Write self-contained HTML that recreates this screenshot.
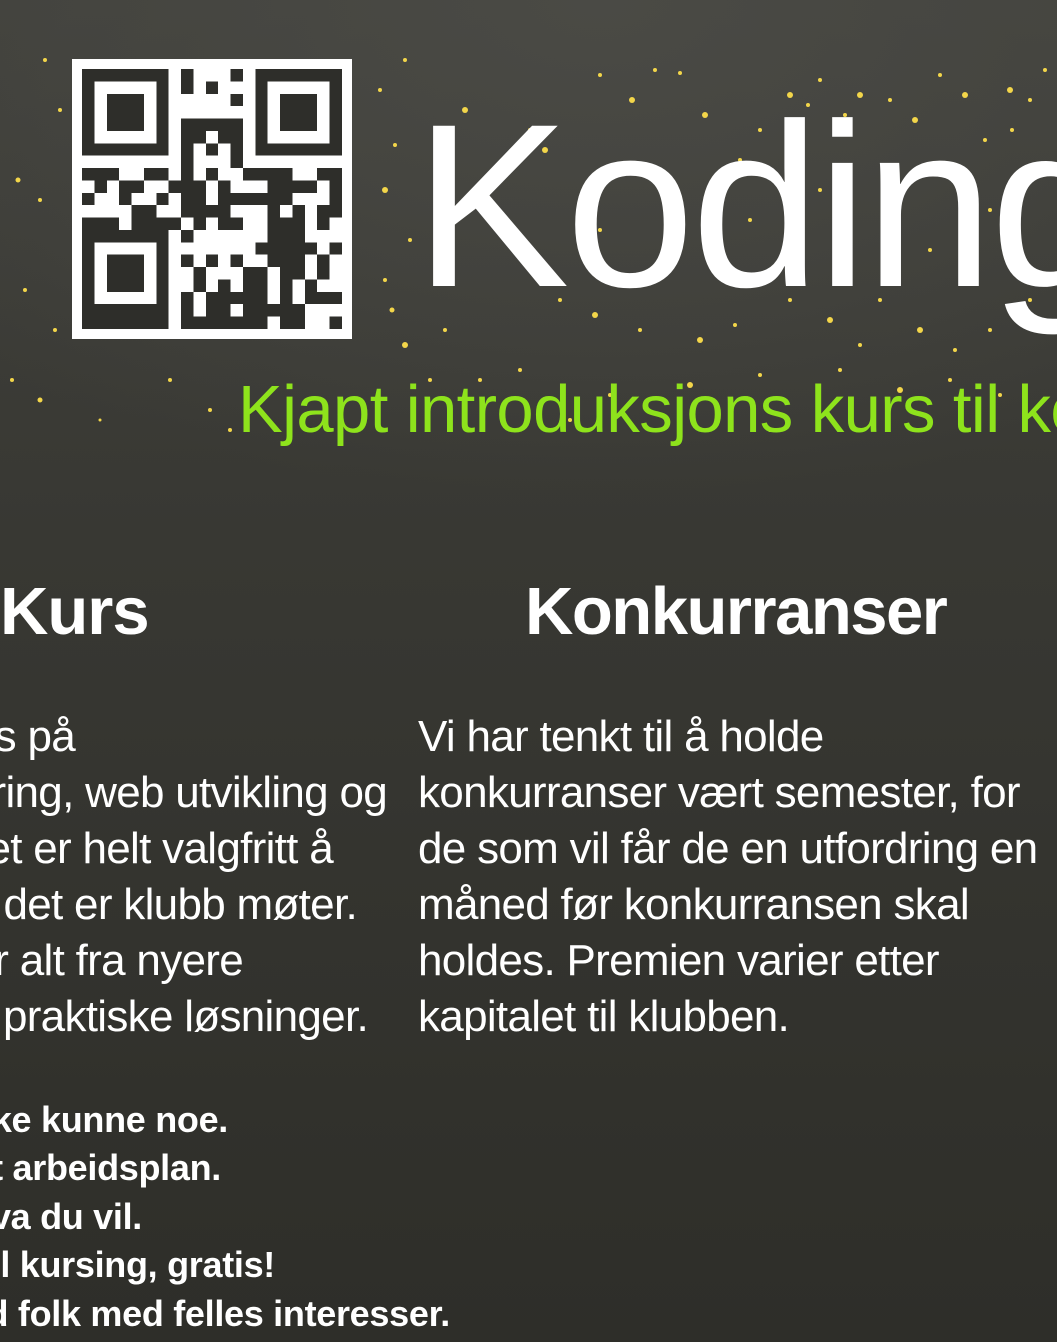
<!DOCTYPE html>
<html><head><meta charset="utf-8"><style>
html,body{margin:0;padding:0;}
body{width:1057px;height:1342px;overflow:hidden;position:relative;
background:radial-gradient(ellipse 900px 500px at 600px 0px,#4a4a45 0%,rgba(60,60,56,0) 100%),linear-gradient(#41413c 0%,#383833 40%,#2e2e29 100%);
font-family:"Liberation Sans",sans-serif;color:#fff;}
.a{position:absolute;white-space:nowrap;}
.body{font-size:44px;line-height:56px;letter-spacing:-0.7px;}
.list{font-size:36px;line-height:48.5px;font-weight:bold;letter-spacing:-0.3px;}
.r{text-align:right;}
.clip{position:absolute;left:0;top:0;width:1057px;height:1342px;overflow:hidden;}
</style></head><body><div class="clip">
<svg class="a" style="left:0;top:0" width="1057" height="460">
<g fill="#f3d64a">
<circle cx="45" cy="60" r="2"/><circle cx="60" cy="110" r="2"/><circle cx="18" cy="180" r="2.5"/><circle cx="40" cy="200" r="2"/><circle cx="25" cy="290" r="2"/><circle cx="55" cy="330" r="2"/><circle cx="12" cy="380" r="2"/><circle cx="40" cy="400" r="2.5"/><circle cx="100" cy="420" r="1.5"/><circle cx="170" cy="380" r="2"/><circle cx="210" cy="410" r="2"/><circle cx="230" cy="430" r="2"/>
<circle cx="385" cy="190" r="3"/><circle cx="395" cy="145" r="2"/><circle cx="380" cy="90" r="2"/><circle cx="405" cy="60" r="2"/><circle cx="410" cy="240" r="2"/><circle cx="392" cy="310" r="2.5"/><circle cx="405" cy="345" r="3"/><circle cx="430" cy="380" r="2"/><circle cx="445" cy="330" r="2"/><circle cx="385" cy="280" r="2"/>
<circle cx="465" cy="110" r="3"/><circle cx="500" cy="170" r="2"/><circle cx="530" cy="130" r="2"/><circle cx="545" cy="150" r="3"/><circle cx="600" cy="75" r="2"/><circle cx="632" cy="100" r="3"/><circle cx="655" cy="70" r="2"/><circle cx="680" cy="73" r="2"/><circle cx="705" cy="115" r="3"/><circle cx="740" cy="160" r="2"/><circle cx="760" cy="130" r="2"/><circle cx="790" cy="95" r="3"/><circle cx="808" cy="105" r="2"/><circle cx="820" cy="80" r="2"/><circle cx="845" cy="115" r="2"/><circle cx="860" cy="95" r="3"/><circle cx="890" cy="100" r="2"/><circle cx="915" cy="120" r="3"/><circle cx="940" cy="75" r="2"/><circle cx="965" cy="95" r="3"/><circle cx="985" cy="140" r="2"/><circle cx="1010" cy="90" r="3"/><circle cx="1030" cy="100" r="2"/><circle cx="1045" cy="70" r="2"/><circle cx="1012" cy="130" r="2"/>
<circle cx="560" cy="300" r="2"/><circle cx="595" cy="315" r="3"/><circle cx="640" cy="330" r="2"/><circle cx="700" cy="340" r="3"/><circle cx="735" cy="325" r="2"/><circle cx="790" cy="300" r="2"/><circle cx="830" cy="320" r="3"/><circle cx="860" cy="345" r="2"/><circle cx="880" cy="300" r="2"/><circle cx="920" cy="330" r="3"/><circle cx="955" cy="350" r="2"/><circle cx="990" cy="330" r="2"/><circle cx="1030" cy="300" r="2"/>
<circle cx="480" cy="380" r="2"/><circle cx="520" cy="370" r="2"/><circle cx="610" cy="395" r="2"/><circle cx="690" cy="385" r="3"/><circle cx="760" cy="375" r="2"/><circle cx="840" cy="370" r="2"/><circle cx="900" cy="390" r="3"/><circle cx="950" cy="380" r="2"/><circle cx="1000" cy="395" r="2"/><circle cx="570" cy="420" r="2"/><circle cx="770" cy="430" r="2"/>
<circle cx="820" cy="190" r="2"/><circle cx="930" cy="250" r="2"/><circle cx="750" cy="220" r="2"/><circle cx="600" cy="230" r="2"/><circle cx="990" cy="210" r="2"/>
</g></svg>
<div class="a" style="left:72px;top:59px;width:280px;height:280px;background:#fff;"></div>
<svg class="a" style="left:82px;top:69px" width="260" height="260" viewBox="0 0 21 21" shape-rendering="crispEdges">
<path fill="#2e2e2a" d="M0 0h7v1h-7zM8 0h1v1h-1zM12 0h1v1h-1zM14 0h7v1h-7z
M0 1h1v1h-1zM6 1h1v1h-1zM8 1h1v1h-1zM10 1h1v1h-1zM14 1h1v1h-1zM20 1h1v1h-1z
M0 2h1v1h-1zM2 2h3v1h-3zM6 2h1v1h-1zM12 2h1v1h-1zM14 2h1v1h-1zM16 2h3v1h-3zM20 2h1v1h-1z
M0 3h1v1h-1zM2 3h3v1h-3zM6 3h1v1h-1zM14 3h1v1h-1zM16 3h3v1h-3zM20 3h1v1h-1z
M0 4h1v1h-1zM2 4h3v1h-3zM6 4h1v1h-1zM8 4h5v1h-5zM14 4h1v1h-1zM16 4h3v1h-3zM20 4h1v1h-1z
M0 5h1v1h-1zM6 5h1v1h-1zM8 5h2v1h-2zM11 5h2v1h-2zM14 5h1v1h-1zM20 5h1v1h-1z
M0 6h7v1h-7zM8 6h1v1h-1zM10 6h1v1h-1zM12 6h1v1h-1zM14 6h7v1h-7z
M8 7h1v1h-1zM12 7h1v1h-1z
M0 8h3v1h-3zM5 8h2v1h-2zM8 8h1v1h-1zM10 8h1v1h-1zM13 8h4v1h-4zM19 8h2v1h-2z
M1 9h1v1h-1zM3 9h2v1h-2zM7 9h3v1h-3zM11 9h1v1h-1zM15 9h4v1h-4zM20 9h1v1h-1z
M0 10h1v1h-1zM3 10h1v1h-1zM6 10h1v1h-1zM8 10h2v1h-2zM11 10h6v1h-6zM20 10h1v1h-1z
M4 11h2v1h-2zM8 11h4v1h-4zM15 11h1v1h-1zM17 11h1v1h-1zM19 11h2v1h-2z
M0 12h3v1h-3zM4 12h4v1h-4zM9 12h1v1h-1zM11 12h2v1h-2zM15 12h3v1h-3zM19 12h1v1h-1z
M0 13h7v1h-7zM8 13h1v1h-1zM15 13h3v1h-3z
M0 14h1v1h-1zM6 14h1v1h-1zM14 14h5v1h-5zM20 14h1v1h-1z
M0 15h1v1h-1zM2 15h3v1h-3zM6 15h1v1h-1zM8 15h1v1h-1zM10 15h1v1h-1zM12 15h1v1h-1zM15 15h3v1h-3zM19 15h1v1h-1z
M0 16h1v1h-1zM2 16h3v1h-3zM6 16h1v1h-1zM9 16h1v1h-1zM13 16h2v1h-2zM16 16h2v1h-2zM19 16h1v1h-1z
M0 17h1v1h-1zM2 17h3v1h-3zM6 17h1v1h-1zM9 17h1v1h-1zM11 17h1v1h-1zM13 17h2v1h-2zM16 17h1v1h-1zM18 17h1v1h-1z
M0 18h1v1h-1zM6 18h1v1h-1zM8 18h1v1h-1zM10 18h5v1h-5zM16 18h1v1h-1zM18 18h3v1h-3z
M0 19h7v1h-7zM8 19h1v1h-1zM10 19h2v1h-2zM13 19h5v1h-5z
M0 20h7v1h-7zM8 20h7v1h-7zM16 20h2v1h-2zM20 20h1v1h-1z"/>
</svg>
<div class="a" style="left:414px;top:90px;font-size:233px;line-height:1;letter-spacing:-4px;">Koding</div>
<div class="a" style="left:238px;top:376px;font-size:67px;line-height:1;color:#8ee31c;letter-spacing:-0.6px;">Kjapt introduksjons kurs til koding</div>
<div class="a" style="left:0;top:578px;font-size:67px;line-height:1;font-weight:bold;letter-spacing:-1px;">Kurs</div>
<div class="a" style="left:525px;top:578px;font-size:67px;line-height:1;font-weight:bold;letter-spacing:-1.5px;">Konkurranser</div>
<div class="a body r" style="right:982px;top:709px;">Vi har kurs på</div>
<div class="a body r" style="right:670px;top:765px;">programmering, web utvikling og</div>
<div class="a body r" style="right:724px;top:821px;">design. Det er helt valgfritt å</div>
<div class="a body r" style="right:700px;top:877px;">delta når det er klubb møter.</div>
<div class="a body r" style="right:814px;top:933px;">Vi lærer alt fra nyere</div>
<div class="a body r" style="right:689px;top:989px;">teknologier til praktiske løsninger.</div>
<div class="a body" style="left:418px;top:709px;">Vi har tenkt til å holde<br>konkurranser vært semester, for<br>de som vil får de en utfordring en<br>måned før konkurransen skal<br>holdes. Premien varier etter<br>kapitalet til klubben.</div>
<div class="a list r" style="right:829px;top:1096px;">Du trenger ikke kunne noe.</div>
<div class="a list r" style="right:836px;top:1144px;">Ingen fast arbeidsplan.</div>
<div class="a list r" style="right:915px;top:1193px;">Lær hva du vil.</div>
<div class="a list r" style="right:782px;top:1241px;">Profesjonell kursing, gratis!</div>
<div class="a list r" style="right:607px;top:1290px;">Bli kjent med folk med felles interesser.</div>
</div></body></html>
